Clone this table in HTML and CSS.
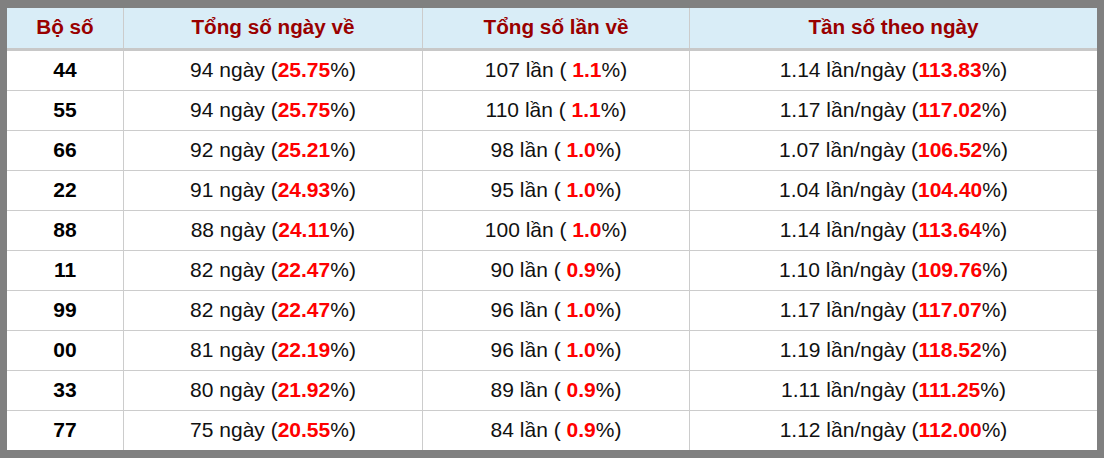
FILE: index.html
```html
<!DOCTYPE html>
<html>
<head>
<meta charset="utf-8">
<link rel="stylesheet" href="styles.css">
</head>
<body>
<div class="frame">
  <div class="row head">
    <div class="cell">Bộ số</div>
    <div class="cell">Tổng số ngày về</div>
    <div class="cell">Tổng số lần về</div>
    <div class="cell">Tần số theo ngày</div>
  </div>
  <div class="row"><div class="cell num">44</div><div class="cell">94 ngày (<b>25.75</b>%)</div><div class="cell">107 lần ( <b>1.1</b>%)</div><div class="cell">1.14 lần/ngày (<b>113.83</b>%)</div></div>
  <div class="row"><div class="cell num">55</div><div class="cell">94 ngày (<b>25.75</b>%)</div><div class="cell">110 lần ( <b>1.1</b>%)</div><div class="cell">1.17 lần/ngày (<b>117.02</b>%)</div></div>
  <div class="row"><div class="cell num">66</div><div class="cell">92 ngày (<b>25.21</b>%)</div><div class="cell">98 lần ( <b>1.0</b>%)</div><div class="cell">1.07 lần/ngày (<b>106.52</b>%)</div></div>
  <div class="row"><div class="cell num">22</div><div class="cell">91 ngày (<b>24.93</b>%)</div><div class="cell">95 lần ( <b>1.0</b>%)</div><div class="cell">1.04 lần/ngày (<b>104.40</b>%)</div></div>
  <div class="row"><div class="cell num">88</div><div class="cell">88 ngày (<b>24.11</b>%)</div><div class="cell">100 lần ( <b>1.0</b>%)</div><div class="cell">1.14 lần/ngày (<b>113.64</b>%)</div></div>
  <div class="row"><div class="cell num">11</div><div class="cell">82 ngày (<b>22.47</b>%)</div><div class="cell">90 lần ( <b>0.9</b>%)</div><div class="cell">1.10 lần/ngày (<b>109.76</b>%)</div></div>
  <div class="row"><div class="cell num">99</div><div class="cell">82 ngày (<b>22.47</b>%)</div><div class="cell">96 lần ( <b>1.0</b>%)</div><div class="cell">1.17 lần/ngày (<b>117.07</b>%)</div></div>
  <div class="row"><div class="cell num">00</div><div class="cell">81 ngày (<b>22.19</b>%)</div><div class="cell">96 lần ( <b>1.0</b>%)</div><div class="cell">1.19 lần/ngày (<b>118.52</b>%)</div></div>
  <div class="row"><div class="cell num">33</div><div class="cell">80 ngày (<b>21.92</b>%)</div><div class="cell">89 lần ( <b>0.9</b>%)</div><div class="cell">1.11 lần/ngày (<b>111.25</b>%)</div></div>
  <div class="row"><div class="cell num">77</div><div class="cell">75 ngày (<b>20.55</b>%)</div><div class="cell">84 lần ( <b>0.9</b>%)</div><div class="cell">1.12 lần/ngày (<b>112.00</b>%)</div></div>
</div>
</body>
</html>
```
FILE: styles.css
```css
html, body {
  margin: 0;
  padding: 0;
  background: #ffffff;
}
.frame {
  width: 1090px;
  border-style: solid;
  border-color: #808080;
  border-width: 8px 7px;
  background: #ffffff;
  font-family: "Liberation Sans", Arial, sans-serif;
  font-size: 21px;
  color: #111111;
}
.row {
  display: grid;
  grid-template-columns: 116px 299px 267px 408px;
  height: 40px;
  box-sizing: border-box;
  border-bottom: 1px solid #cccccc;
}
.row:last-child {
  border-bottom: none;
  height: 39px;
}
.head {
  background: #d9edf7;
  height: 43px;
  border-bottom: 3px solid #c8c8c8;
  font-weight: bold;
  font-size: 20.7px;
  color: #990000;
}
.cell {
  display: flex;
  align-items: center;
  justify-content: center;
  white-space: pre;
  padding-bottom: 2px;
  border-left: 1px solid #cccccc;
}
.cell:first-child {
  border-left: none;
}
.cell b {
  color: #ff0000;
  font-weight: bold;
}
.num {
  font-weight: bold;
  color: #000000;
}
```
